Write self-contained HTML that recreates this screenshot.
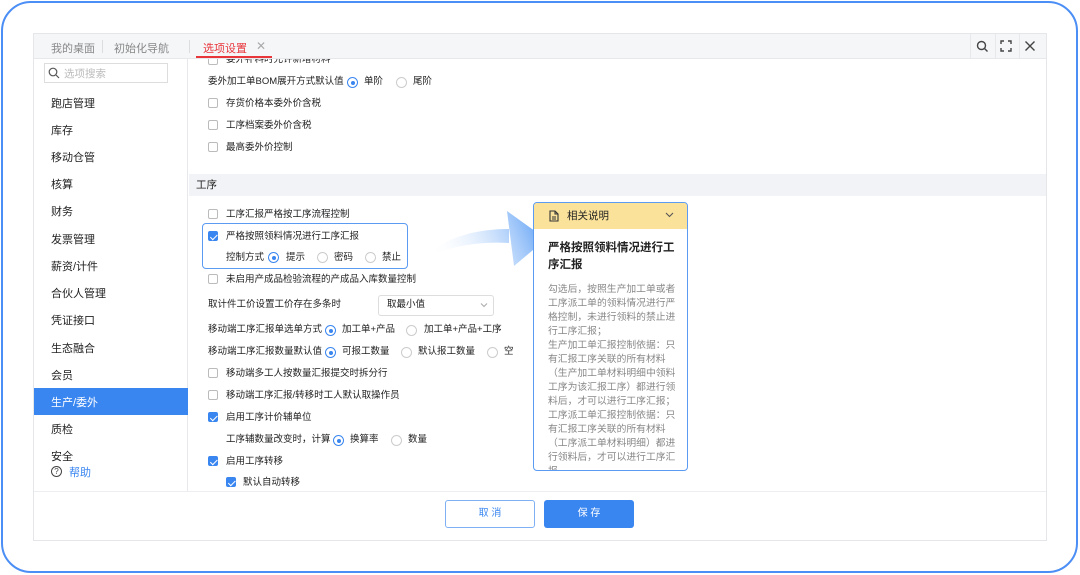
<!DOCTYPE html>
<html><head><meta charset="utf-8"><style>
*{box-sizing:border-box;margin:0;padding:0}
body{width:1080px;height:575px;background:#fff;position:relative;overflow:hidden;font-family:"Liberation Sans","Noto Sans CJK SC",sans-serif;color:#333}
.frame{position:absolute;left:1px;top:1px;width:1077px;height:572px;border:2px solid #4b8ef5;border-radius:30px}
.app{position:absolute;left:33px;top:33px;width:1014px;height:508px;border:1px solid #e4e6ea;background:#fff;overflow:hidden}
.tabbar{position:absolute;left:0;top:0;width:100%;height:25px;background:#f5f6f8;border-bottom:1px solid #e6e8ec;font-size:11px;color:#888}
.a{position:absolute;white-space:nowrap}
.side{position:absolute;left:0;top:25px;width:154px;height:432px;border-right:1px solid #e6e8ec}
.si{position:absolute;left:17px;font-size:11px;color:#222}
.cb{position:absolute;width:10px;height:10px;border:1px solid #bbb;border-radius:2px;background:#fff}
.cb.on{background:#3a86f0;border-color:#3a86f0}
.cb.on:after{content:"";position:absolute;left:2.5px;top:0.5px;width:3px;height:5.5px;border:solid #fff;border-width:0 1.5px 1.5px 0;transform:rotate(45deg)}
.rd{position:absolute;width:11px;height:11px;border:1px solid #ccc;border-radius:50%;background:#fff}
.rd.on{border-color:#3a86f0}
.rd.on:after{content:"";position:absolute;left:2.5px;top:2.5px;width:4px;height:4px;border-radius:50%;background:#3a86f0}
.t{position:absolute;font-size:9.5px;color:#222;white-space:nowrap;line-height:12px}
</style></head><body>
<div class="frame"></div>
<div class="app">
 <div class="tabbar">
  <div class="a" style="left:17px;top:6px">我的桌面</div>
  <div class="a" style="left:68px;top:6px;width:1px;height:13px;background:#ddd"></div>
  <div class="a" style="left:80px;top:6px">初始化导航</div>
  <div class="a" style="left:155px;top:6px;width:1px;height:13px;background:#ddd"></div>
  <div class="a" style="left:169px;top:6px;color:#e8363b">选项设置</div>
  <div class="a" style="left:222px;top:5px;color:#aaa;font-size:12px">✕</div>
  <div class="a" style="left:162px;top:22px;width:76px;height:2px;background:#e8363b"></div>
  <div class="a" style="left:936px;top:0;width:1px;height:25px;background:#e6e8ec"></div>
  <div class="a" style="left:961px;top:0;width:1px;height:25px;background:#e6e8ec"></div>
  <div class="a" style="left:985px;top:0;width:1px;height:25px;background:#e6e8ec"></div>
  <svg class="a" style="left:942px;top:6px" width="13" height="13" viewBox="0 0 13 13"><circle cx="5.5" cy="5.5" r="4" fill="none" stroke="#444" stroke-width="1.4"/><path d="M8.5 8.5l3 3" stroke="#444" stroke-width="1.4"/></svg>
  <svg class="a" style="left:966px;top:6px" width="12" height="12" viewBox="0 0 12 12"><path d="M1 4V1h3M8 1h3v3M11 8v3H8M4 11H1V8" fill="none" stroke="#444" stroke-width="1.4"/></svg>
  <svg class="a" style="left:990px;top:6px" width="12" height="12" viewBox="0 0 12 12"><path d="M1.5 1.5l9 9M10.5 1.5l-9 9" stroke="#444" stroke-width="1.4"/></svg>
 </div>
 <div class="side">
  <div class="a" style="left:10px;top:4px;width:124px;height:20px;border:1px solid #ddd;background:#fff"></div>
  <svg class="a" style="left:14px;top:8px" width="12" height="12" viewBox="0 0 12 12"><circle cx="5" cy="5" r="3.8" fill="none" stroke="#555" stroke-width="1.2"/><path d="M8 8l3 3" stroke="#555" stroke-width="1.2"/></svg>
  <div class="a" style="left:30px;top:7px;font-size:10.5px;color:#bbb">选项搜索</div>
  <div class="si" style="top:36px">跑店管理</div>
  <div class="si" style="top:63px">库存</div>
  <div class="si" style="top:90px">移动仓管</div>
  <div class="si" style="top:117px">核算</div>
  <div class="si" style="top:144px">财务</div>
  <div class="si" style="top:172px">发票管理</div>
  <div class="si" style="top:199px">薪资/计件</div>
  <div class="si" style="top:226px">合伙人管理</div>
  <div class="si" style="top:253px">凭证接口</div>
  <div class="si" style="top:281px">生态融合</div>
  <div class="si" style="top:308px">会员</div>
  <div class="a" style="left:0;top:329px;width:154px;height:27px;background:#3a86f0"></div>
  <div class="si" style="top:335px;color:#fff">生产/委外</div>
  <div class="si" style="top:362px">质检</div>
  <div class="si" style="top:389px">安全</div>
  <div class="a" style="left:17px;top:407px;width:11px;height:11px;border:1px solid #444;border-radius:50%;font-size:8px;line-height:9px;text-align:center;color:#444">?</div>
  <div class="si" style="top:405px;left:35px;color:#3a86f0">帮助</div>
 </div>
 <!-- content -->
 <div class="a" style="left:155px;top:25px;width:859px;height:432px;overflow:hidden">
  <div class="cb" style="left:19px;top:-4px"></div><div class="t" style="left:37px;top:-5px">委外补料时允许新增材料</div>
  <div class="t" style="left:19px;top:17px">委外加工单BOM展开方式默认值</div>
  <div class="rd on" style="left:158px;top:18px"></div><div class="t" style="left:175px;top:17px">单阶</div>
  <div class="rd" style="left:207px;top:18px"></div><div class="t" style="left:224px;top:17px">尾阶</div>
  <div class="cb" style="left:19px;top:39px"></div><div class="t" style="left:37px;top:39px">存货价格本委外价含税</div>
  <div class="cb" style="left:19px;top:61px"></div><div class="t" style="left:37px;top:61px">工序档案委外价含税</div>
  <div class="cb" style="left:19px;top:83px"></div><div class="t" style="left:37px;top:83px">最高委外价控制</div>
  <div class="a" style="left:0;top:115px;width:859px;height:22px;background:#f2f3f6"></div>
  <div class="t" style="left:7px;top:120px;font-size:10.5px">工序</div>
  <div class="cb" style="left:19px;top:150px"></div><div class="t" style="left:37px;top:150px">工序汇报严格按工序流程控制</div>
  <div class="a" style="left:13px;top:164px;width:206px;height:46px;border:1.5px solid #5b9bf2;border-radius:4px"></div>
  <div class="cb on" style="left:19px;top:172px"></div><div class="t" style="left:37px;top:172px">严格按照领料情况进行工序汇报</div>
  <div class="t" style="left:37px;top:193px">控制方式</div>
  <div class="rd on" style="left:79px;top:193px"></div><div class="t" style="left:97px;top:193px">提示</div>
  <div class="rd" style="left:128px;top:193px"></div><div class="t" style="left:145px;top:193px">密码</div>
  <div class="rd" style="left:176px;top:193px"></div><div class="t" style="left:193px;top:193px">禁止</div>
  <div class="cb" style="left:19px;top:215px"></div><div class="t" style="left:37px;top:215px">未启用产成品检验流程的产成品入库数量控制</div>
  <div class="t" style="left:19px;top:240px">取计件工价设置工价存在多条时</div>
  <div class="a" style="left:189px;top:236px;width:116px;height:21px;border:1px solid #ddd;border-radius:3px"></div>
  <div class="t" style="left:198px;top:240px">取最小值</div>
  <svg class="a" style="left:291px;top:243px" width="8" height="6" viewBox="0 0 8 6"><path d="M1 1.5l3 3 3-3" fill="none" stroke="#aaa"/></svg>
  <div class="t" style="left:19px;top:265px">移动端工序汇报单选单方式</div>
  <div class="rd on" style="left:136px;top:266px"></div><div class="t" style="left:153px;top:265px">加工单+产品</div>
  <div class="rd" style="left:217px;top:266px"></div><div class="t" style="left:235px;top:265px">加工单+产品+工序</div>
  <div class="t" style="left:19px;top:287px">移动端工序汇报数量默认值</div>
  <div class="rd on" style="left:136px;top:288px"></div><div class="t" style="left:153px;top:287px">可报工数量</div>
  <div class="rd" style="left:212px;top:288px"></div><div class="t" style="left:229px;top:287px">默认报工数量</div>
  <div class="rd" style="left:298px;top:288px"></div><div class="t" style="left:315px;top:287px">空</div>
  <div class="cb" style="left:19px;top:309px"></div><div class="t" style="left:37px;top:309px">移动端多工人按数量汇报提交时拆分行</div>
  <div class="cb" style="left:19px;top:331px"></div><div class="t" style="left:37px;top:331px">移动端工序汇报/转移时工人默认取操作员</div>
  <div class="cb on" style="left:19px;top:353px"></div><div class="t" style="left:37px;top:353px">启用工序计价辅单位</div>
  <div class="t" style="left:37px;top:375px">工序辅数量改变时，计算</div>
  <div class="rd on" style="left:144px;top:376px"></div><div class="t" style="left:161px;top:375px">换算率</div>
  <div class="rd" style="left:202px;top:376px"></div><div class="t" style="left:219px;top:375px">数量</div>
  <div class="cb on" style="left:19px;top:397px"></div><div class="t" style="left:37px;top:397px">启用工序转移</div>
  <div class="cb on" style="left:37px;top:418px"></div><div class="t" style="left:54px;top:418px">默认自动转移</div>
  <!-- arrow -->
  <svg class="a" style="left:230px;top:142px" width="135" height="70" viewBox="0 0 135 70">
   <defs><linearGradient id="g" x1="0" x2="1" y1="0.5" y2="0.3"><stop offset="0" stop-color="#fff" stop-opacity="0"/><stop offset="1" stop-color="#5b9ef5"/></linearGradient></defs>
   <path d="M5 58 C25 35 60 28 90 28 L90 42 C60 40 30 45 5 58Z M88 10 L127 38 L95 65 Z" fill="url(#g)"/>
  </svg>
  <!-- panel -->
  <div class="a" style="left:344px;top:143px;width:155px;height:269px;border:1.5px solid #5b9bf2;border-radius:4px;overflow:hidden;background:#fff">
   <div class="a" style="left:0;top:0;width:100%;height:26px;background:#fbe29a"></div>
   <svg class="a" style="left:15px;top:7px" width="10" height="12" viewBox="0 0 10 12"><path d="M1 1h5l3 3v7H1z M6 1v3h3 M3 7h4 M3 9h4" fill="none" stroke="#333" stroke-width="1.1"/></svg>
   <div class="t" style="left:33px;top:7px;font-size:10.5px">相关说明</div>
   <svg class="a" style="left:131px;top:9px" width="9" height="6" viewBox="0 0 9 6"><path d="M1 1l3.5 3.5L8 1" fill="none" stroke="#555" stroke-width="1.1"/></svg>
   <div class="a" style="left:14px;top:37px;width:130px;font-size:11.5px;font-weight:bold;line-height:17px;white-space:normal;color:#222">严格按照领料情况进行工序汇报</div>
   <div class="a" style="left:14px;top:80px;width:130px;font-size:9.8px;line-height:14px;white-space:normal;color:#888">勾选后，按照生产加工单或者工序派工单的领料情况进行严格控制，未进行领料的禁止进行工序汇报；<br>生产加工单汇报控制依据：只有汇报工序关联的所有材料（生产加工单材料明细中领料工序为该汇报工序）都进行领料后，才可以进行工序汇报；<br>工序派工单汇报控制依据：只有汇报工序关联的所有材料（工序派工单材料明细）都进行领料后，才可以进行工序汇报</div>
  </div>
 </div>
 <!-- footer -->
 <div class="a" style="left:0;top:457px;width:1014px;height:51px;background:#fff;border-top:1px solid #eceef1"></div>
 <div class="a" style="left:411px;top:466px;width:90px;height:28px;border:1px solid #7fb0f5;border-radius:3px;font-size:10px;color:#3a86f0;text-align:center;line-height:26px">取 消</div>
 <div class="a" style="left:510px;top:466px;width:90px;height:28px;background:#3a86f0;border-radius:3px;font-size:10px;color:#fff;text-align:center;line-height:28px">保 存</div>
</div>
</body></html>
